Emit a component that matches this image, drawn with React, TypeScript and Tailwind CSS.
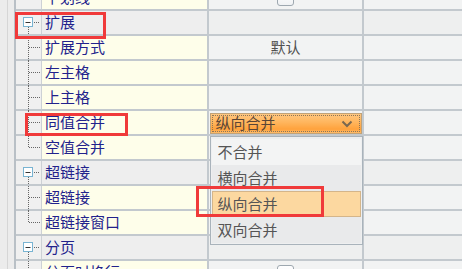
import React from "react";

type Row = {
  label: string;
  kind: "group" | "child";
  last?: boolean;
  value?: "checkbox" | "text" | "select";
  text?: string;
};

const rows: Row[] = [
  { label: "下划线", kind: "child", last: true, value: "checkbox" },
  { label: "扩展", kind: "group" },
  { label: "扩展方式", kind: "child", value: "text", text: "默认" },
  { label: "左主格", kind: "child" },
  { label: "上主格", kind: "child" },
  { label: "同值合并", kind: "child", value: "select" },
  { label: "空值合并", kind: "child", last: true },
  { label: "超链接", kind: "group" },
  { label: "超链接", kind: "child" },
  { label: "超链接窗口", kind: "child", last: true },
  { label: "分页", kind: "group" },
  { label: "分页时换行", kind: "child", value: "checkbox" },
];

const FONT = { fontFamily: '"Noto Sans CJK SC", "Noto Sans", sans-serif' };

function Tree({ row, first }: { row: Row; first: boolean }) {
  const dot = { stroke: "#666", strokeWidth: 1, strokeDasharray: "1 1" };
  if (row.kind === "group") {
    return (
      <svg width="26" height="23" className="block">
        <rect x="7.5" y="6.5" width="9" height="9" fill="#fff" stroke="#79b4d2" />
        <line x1="9.5" y1="11.5" x2="14.5" y2="11.5" stroke="#333" strokeWidth="1" />
        <line x1="18" y1="11.5" x2="24" y2="11.5" {...dot} />
        <line x1="12.5" y1="16" x2="12.5" y2="23" {...dot} />
      </svg>
    );
  }
  return (
    <svg width="26" height="25" className="block" style={{ marginBottom: -2 }}>
      {!first && (
        <line x1="12.5" y1="0" x2="12.5" y2={row.last ? 12 : 25} {...dot} />
      )}
      <line x1="13" y1="11.5" x2="24" y2="11.5" {...dot} />
    </svg>
  );
}

function Checkbox() {
  return (
    <div className="w-[17px] h-[16px] rounded-[3px] border border-[#9ea8b0] bg-gradient-to-b from-white to-[#f0f2f4]" />
  );
}

function Select() {
  return (
    <div className="relative w-[152px] h-[21px] mt-[2px] self-start">
      <div
        className="absolute inset-0 border border-[#bfa27a]"
        style={{
          background:
            "linear-gradient(to bottom, #ffc781 0%, #ffb55c 45%, #ffa23c 80%, #ffbc6a 100%)",
        }}
      />
      <div className="absolute inset-[2px] border border-dotted border-[#8c7658]" />
      <div
        className="absolute left-[6px] top-0 h-full flex items-center text-[15px] text-[#5a4636]"
        style={FONT}
      >
        纵向合并
      </div>
      <svg width="12" height="8" viewBox="0 0 12 8" className="absolute right-[9px] top-[7px]">
        <path d="M1.5 1.5 L6 6 L10.5 1.5" fill="none" stroke="#7a6850" strokeWidth="2" />
      </svg>
      <div className="absolute left-0 top-[23px] w-[153px] h-[109px] z-10 border border-[#a9b3bb] bg-[#eeeff0] pt-[2px] px-[1px]">
        <div className="h-[26px] flex items-center pl-[6px] bg-[#f3f4f4] text-[15px] text-[#555]" style={FONT}>
          不合并
        </div>
        <div className="h-[26px] flex items-center pl-[6px] bg-[#e9eaeb] text-[15px] text-[#555]" style={FONT}>
          横向合并
        </div>
        <div
          className="h-[26px] flex items-center pl-[5px] bg-[#fcd8a0] border border-[#d4b58a] text-[15px] text-[#555]"
          style={FONT}
        >
          纵向合并
        </div>
        <div className="h-[26px] flex items-center pl-[6px] bg-[#e9eaeb] text-[15px] text-[#555]" style={FONT}>
          双向合并
        </div>
      </div>
    </div>
  );
}

export default function App() {
  return (
    <div className="relative w-[462px] h-[269px] overflow-hidden bg-[#f2f3f3]">
      <div className="flex h-full">
        <div className="w-[16px] h-full flex bg-[#ececec] border-r-2 border-[#b9c0c6]">
          <div className="w-[8px] h-full border-r border-[#d6d6d6]" />
        </div>
        <div className="flex-1 -mt-[14px]">
          {rows.map((row, i) => {
            const group = row.kind === "group";
            return (
              <div key={i} className="flex h-[25px] border-b-2 border-[#c3c9ce]">
                <div className="w-[26px] h-full bg-[#f0f0f0] border-r border-[#cdd1d5]">
                  <Tree row={row} first={i === 0} />
                </div>
                <div
                  className={`w-[167px] h-full flex items-center pl-[3px] text-[15px] text-[#22228c] border-r-2 border-[#c3c9ce] ${
                    group ? "bg-[#eeeeee]" : "bg-[#fefeea]"
                  }`}
                  style={FONT}
                >
                  {row.label}
                </div>
                <div
                  className={`relative w-[155px] h-full flex items-center justify-center border-r-2 border-[#c3c9ce] ${
                    group ? "bg-[#eeefef]" : "bg-[#f2f3f3]"
                  }`}
                >
                  {row.value === "checkbox" && <Checkbox />}
                  {row.value === "text" && (
                    <span className="text-[15px] text-[#505050]" style={FONT}>
                      {row.text}
                    </span>
                  )}
                  {row.value === "select" && <Select />}
                </div>
                <div className={`flex-1 h-full ${group ? "bg-[#eeefef]" : "bg-[#f2f3f3]"}`} />
              </div>
            );
          })}
        </div>
      </div>
      <div className="absolute left-[15px] top-[12px] w-[91px] h-[27px] border-[3px] border-[#f03a3a]" />
      <div className="absolute left-[25px] top-[113px] w-[103px] h-[23px] border-[3px] border-[#f03a3a]" />
      <div className="absolute left-[196px] top-[186px] w-[128px] h-[31px] border-[3px] border-[#f03a3a] z-20" />
    </div>
  );
}
